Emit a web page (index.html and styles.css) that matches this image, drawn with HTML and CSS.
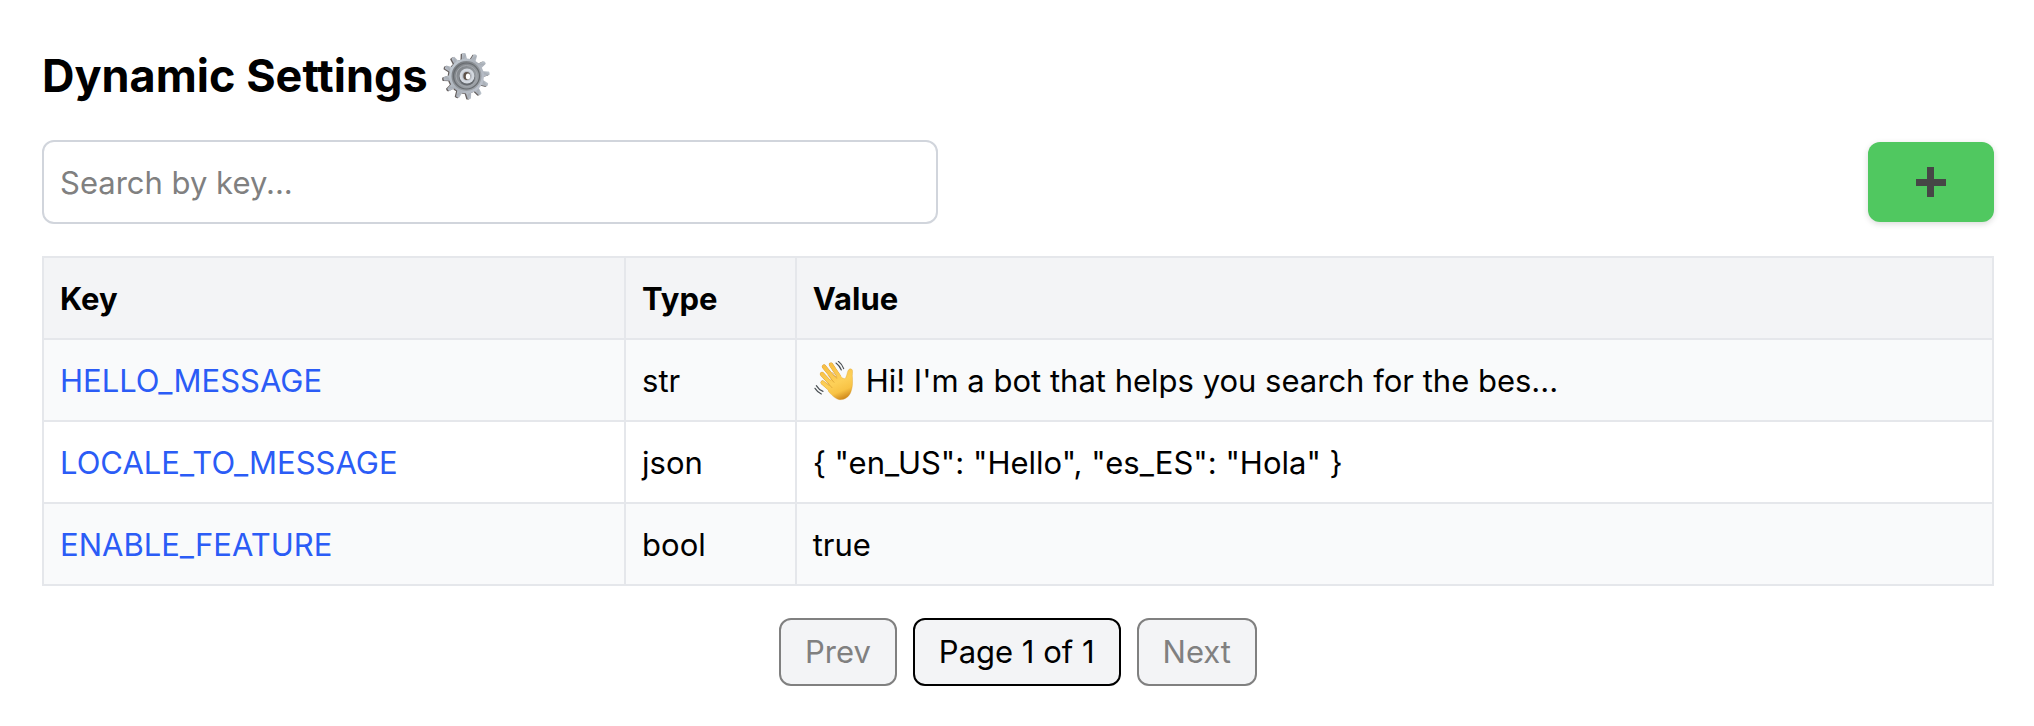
FILE: index.html
```html
<!DOCTYPE html>
<html lang="en">
<head>
<meta charset="utf-8">
<meta name="viewport" content="width=device-width, initial-scale=1">
<title>Dynamic Settings</title>
<link rel="stylesheet" href="styles.css">
</head>
<body>
<main class="page">
  <h1 class="title">Dynamic Settings
    <svg class="gear" viewBox="0 0 48 48" aria-hidden="true">
      <defs>
        <linearGradient id="metal" x1="0" y1="0" x2="1" y2="1">
          <stop offset="0" stop-color="#c9d2da"/><stop offset=".5" stop-color="#a9afb7"/><stop offset="1" stop-color="#c3c9d4"/>
        </linearGradient>
        <linearGradient id="dish" x1="0" y1="0" x2="1" y2="1">
          <stop offset="0" stop-color="#73777b"/><stop offset=".5" stop-color="#8f9499"/><stop offset="1" stop-color="#a4a9af"/>
        </linearGradient>
        <g id="teeth">
          <g id="tooth-pair"><path d="M21 9 22.300 1.200Q24 .3 25.700 1.200L27 9Z"/><path d="M21 39 22.300 46.800Q24 47.700 25.700 46.800L27 39Z"/></g>
          <use href="#tooth-pair" transform="rotate(30 24 24)"/>
          <use href="#tooth-pair" transform="rotate(60 24 24)"/>
          <use href="#tooth-pair" transform="rotate(90 24 24)"/>
          <use href="#tooth-pair" transform="rotate(120 24 24)"/>
          <use href="#tooth-pair" transform="rotate(150 24 24)"/>
          <circle cx="24" cy="24" r="17.500"/>
        </g>
      </defs>
      <use href="#teeth" fill="#66605f" transform="translate(-.8 .5) rotate(-7 24 24)"/>
      <use href="#teeth" fill="url(#metal)" transform="translate(.5 0) rotate(-7 24 24)"/>
      <circle cx="24.500" cy="24" r="15" fill="url(#dish)"/>
      <circle cx="24.500" cy="24" r="13" fill="none" stroke="#686c70" stroke-width="1.200"/>
      <circle cx="24.500" cy="24" r="10.500" fill="none" stroke="#a4a8ad" stroke-width="1"/>
      <circle cx="25" cy="25.500" r="8" fill="#666a6f"/>
      <circle cx="25" cy="24" r="7.500" fill="#d3d8df"/>
      <circle cx="25" cy="24" r="5" fill="#b9bec6"/>
      <ellipse cx="24.800" cy="24" rx="3.500" ry="4" fill="#5d5148"/>
      <ellipse cx="26" cy="24.500" rx="2.200" ry="3" fill="#fff"/>
    </svg>
  </h1>

  <div class="toolbar">
    <input class="search" type="search" placeholder="Search by key..." aria-label="Search by key">
    <button class="add" type="button" aria-label="Add setting">
      <svg class="plus" viewBox="0 0 30 30" aria-hidden="true"><path d="M11 0h7v12h12v7H18v11h-7V19H0v-7h11z" fill="#464646"/></svg>
    </button>
  </div>

  <table class="settings">
    <colgroup><col class="col-key"><col class="col-type"><col></colgroup>
    <thead>
      <tr><th scope="col">Key</th><th scope="col">Type</th><th scope="col">Value</th></tr>
    </thead>
    <tbody>
      <tr>
        <td><a href="#hello">HELLO_MESSAGE</a></td><td>str</td>
        <td><span class="message"><svg class="wave" viewBox="42 47 120 120" aria-hidden="true">
          <defs>
            <linearGradient id="skin" gradientUnits="userSpaceOnUse" x1="80" y1="55" x2="125" y2="163">
              <stop offset="0" stop-color="#f7bd43"/><stop offset=".55" stop-color="#fdd058"/><stop offset=".8" stop-color="#f8c345"/><stop offset="1" stop-color="#d18b1d"/>
            </linearGradient>
          </defs>
          <g fill="none" stroke="#d99a2c" stroke-width="13" stroke-linecap="round"><path d="M96 58 120 94M75 64 108 104M69 86 102 122M71 112 102 138"/></g>
          <path d="M100 92 132 98C139 104 141 96 144 86 146 74 151 69 157 71 163 74 160 82 160 91 161 108 162 122 156 139 151 154 137 164 122 163 108 161 98 149 88 138L92 110Z" fill="url(#skin)" stroke="#d99a2c" stroke-width="1"/>
          <g fill="none" stroke="url(#skin)" stroke-width="11" stroke-linecap="round"><path d="M96 58 124 99M75 64 112 110M69 86 108 128M71 112 108 144"/></g>
          <path d="M101 82 113 99M88 91 105 111M86 113 99 127" fill="none" stroke="#d79b30" stroke-width="2" stroke-linecap="round"/>
          <path d="M118 48Q130 57 134 70M111 53Q122 61 127 74M52 121Q59 133 72 138M48 129Q55 140 67 146" fill="none" stroke="#4b5054" stroke-width="3.500" stroke-linecap="round"/>
        </svg>Hi! I'm a bot that helps you search for the bes...</span></td>
      </tr>
      <tr><td><a href="#locale">LOCALE_TO_MESSAGE</a></td><td>json</td><td>{ "en_US": "Hello", "es_ES": "Hola" }</td></tr>
      <tr><td><a href="#feature">ENABLE_FEATURE</a></td><td>bool</td><td>true</td></tr>
    </tbody>
  </table>

  <nav class="pager" aria-label="Pagination">
    <button class="page-button" type="button" disabled>Prev</button>
    <span class="page-button">Page 1 of 1</span>
    <button class="page-button" type="button" disabled>Next</button>
  </nav>
</main>
</body>
</html>
```
FILE: styles.css
```css
*,
*::before,
*::after {
  box-sizing: border-box;
}

body {
  margin: 0;
  background: #fff;
  color: #000;
  font-family: Inter, "Liberation Sans", sans-serif;
  font-size: 31px;
  line-height: 48px;
}

.page {
  padding: 48px 40px 40px 42px;
}

.title {
  display: flex;
  align-items: center;
  gap: 14px;
  margin: 0 0 36px;
  font-size: 45px;
  font-weight: 700;
  line-height: 56px;
}

.gear {
  width: 48px;
  height: 48px;
}

.toolbar {
  display: flex;
  align-items: center;
  justify-content: space-between;
  gap: 32px;
  margin-bottom: 32px;
}

.search {
  appearance: none;
  flex: 1;
  min-width: 0;
  max-width: 896px;
  height: 84px;
  padding: 16px;
  border: 2px solid #d1d5dc;
  border-radius: 12px;
  background: #fff;
  color: inherit;
  font: inherit;
}

.search::placeholder {
  color: #808080;
  opacity: 1;
}

.add {
  display: flex;
  align-items: center;
  justify-content: center;
  height: 80px;
  padding: 0 48px;
  border: 0;
  border-radius: 12px;
  background: #50c860;
  box-shadow: 0 2px 6px rgb(0 0 0 / 15%);
  cursor: pointer;
}

.plus {
  width: 30px;
  height: 30px;
}

.settings {
  width: 100%;
  table-layout: fixed;
  border-collapse: collapse;
}

.col-key {
  width: 29.85%;
}

.col-type {
  width: 8.75%;
}

.settings th,
.settings td {
  padding: 17px 16px 15px;
  border: 2px solid #e5e7eb;
  text-align: left;
}

.settings th {
  background: #f3f4f6;
  font-weight: 700;
}

.settings tbody tr:nth-child(odd) {
  background: #f9fafb;
}

.settings a {
  color: #2b5cf6;
  text-decoration: none;
}

.message {
  display: flex;
  align-items: center;
  gap: 13px;
}

.wave {
  flex: none;
  width: 40px;
  height: 40px;
}

.pager {
  display: flex;
  justify-content: center;
  gap: 16px;
  margin-top: 32px;
}

.page-button {
  padding: 8px 24px;
  border: 2px solid #000;
  border-radius: 12px;
  background: #f3f4f6;
  color: #000;
  font: inherit;
}

.page-button:disabled {
  border-color: #808080;
  color: #808080;
}
```
